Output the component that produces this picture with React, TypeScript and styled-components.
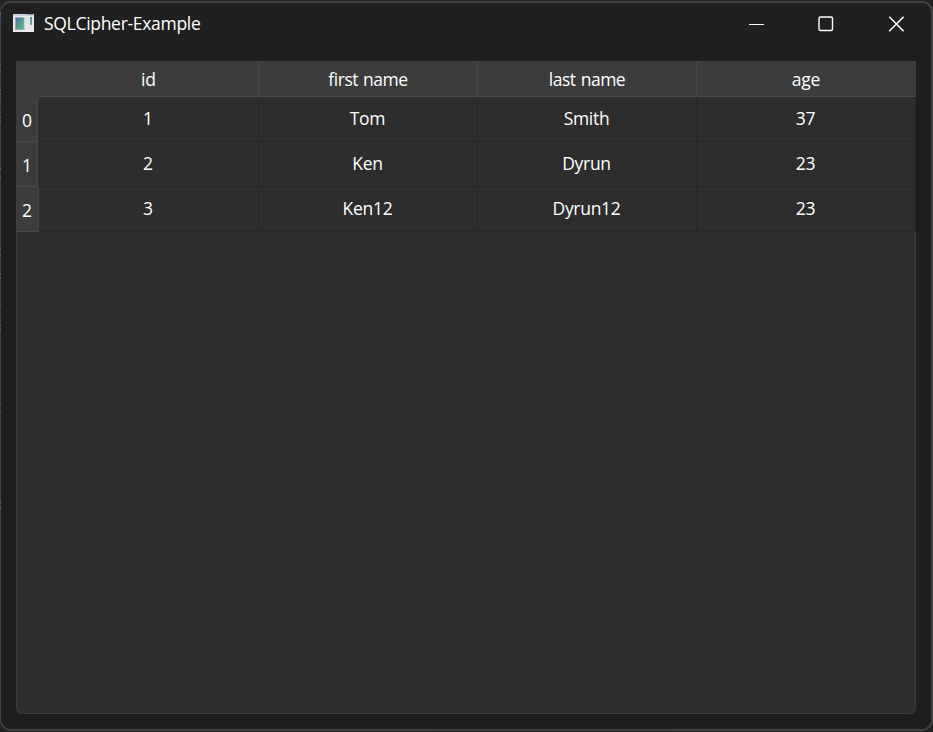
import React from "react";
import styled, { createGlobalStyle } from "styled-components";

const Global = createGlobalStyle`
  * { box-sizing: border-box; }
  html, body { margin: 0; padding: 0; background: #202224; }
`;

const Desktop = styled.div`
  position: relative;
  width: 933px;
  height: 732px;
  padding: 1px 0;
  background: linear-gradient(90deg, #222426, #211f1f);
  overflow: hidden;
  font-family: "Open Sans", "Noto Sans", sans-serif;
  font-size: 17.5px;
  color: #fff;
`;

/* Slivers of the editor behind the window, seen along its left edge. */
const EdgeGlints = styled.svg`
  position: absolute;
  left: 0;
  top: 0;
  width: 1px;
  height: 732px;
`;

const Window = styled.div`
  height: 730px;
  display: flex;
  flex-direction: column;
  border: solid #424242;
  border-width: 2px 2px 2px 1px;
  border-radius: 11px;
  background: #1e1e1e;
  overflow: hidden;
`;

const TitleBar = styled.header`
  height: 43px;
  flex: none;
  display: flex;
  align-items: flex-start;
  background: #202020;
  padding-left: 12px;
`;

const AppIcon = styled.svg`
  width: 21px;
  height: 18px;
  margin: 11px 10px 0 0;
`;

const Title = styled.div`
  flex: 1;
  line-height: 24px;
  margin-top: 8px;
  letter-spacing: -0.3px;
`;

const WindowButton = styled.button`
  width: 70px;
  height: 41px;
  padding: 0;
  border: 0;
  background: none;
  display: grid;
  place-items: center;
`;

const Table = styled.main`
  flex: 1;
  margin: 15px 15px 15px 15px;
  background: #2d2d2d;
  border-radius: 0 0 6px 6px;
  box-shadow: inset 0 0 0 1px #3b3b3b;
`;

const Row = styled.div<{ $header?: boolean }>`
  height: ${(p) => (p.$header ? 36 : 45)}px;
  display: grid;
  grid-template-columns: 23px 220px 219px 219px 219px;
  grid-template-rows: 100%;
`;

const Corner = styled.div`
  background: #3c3c3c;
  border-right: 1px solid #373737;
`;

const ColumnHeader = styled.div<{ $spacing: number }>`
  background: #3c3c3c;
  border-right: 1px solid #484848;
  border-bottom: 1px solid #4a4a4a;
  text-align: center;
  line-height: 37px;
  letter-spacing: ${(p) => p.$spacing}px;
  word-spacing: 1px;
  &:last-child { border-right-color: #3c3c3c; }
`;

const RowHeader = styled.div<{ $last: boolean }>`
  background: #3c3c3c;
  border-right: 1px solid ${(p) => (p.$last ? "#424242" : "#484848")};
  border-bottom: 1px solid #4a4a4a;
  margin-right: ${(p) => (p.$last ? 0 : 1)}px;
  padding-left: ${(p) => (p.$last ? 0 : 1)}px;
  text-align: center;
  line-height: 47px;
`;

const Cell = styled.div<{ $spacing: number }>`
  background: #2d2d2d;
  border-right: 1px solid #262626;
  border-bottom: 1px solid #262626;
  padding-right: 1px;
  text-align: center;
  line-height: 43px;
  letter-spacing: ${(p) => p.$spacing}px;
`;

const columns: [string, number][] = [["id", -0.1], ["first name", -0.48], ["last name", -0.48], ["age", -0.2]];
const rows = [
  ["1", "Tom", "Smith", "37"],
  ["2", "Ken", "Dyrun", "23"],
  ["3", "Ken12", "Dyrun12", "23"],
];

const glints: [number, string][] = [
  [13, "#2f7b88"], [14, "#2f7b88"], [18, "#27648a"], [20, "#27648a"],
  [64, "#2f7280"], [70, "#376f94"], [90, "#35807f"], [93, "#35807f"],
  [97, "#2d6590"], [100, "#2e7a74"], [117, "#866858"], [121, "#866858"],
  [142, "#2f7280"], [148, "#376f94"], [168, "#866858"], [177, "#866858"],
  [221, "#6d604d"], [248, "#2e7a74"], [254, "#2e7a74"], [273, "#866858"],
  [277, "#866858"], [298, "#2f7280"], [304, "#376f94"], [325, "#866858"],
  [329, "#866858"], [378, "#35738a"], [385, "#2e7a74"], [403, "#2e7a74"],
  [411, "#2e7a74"], [502, "#777777"], [507, "#777777"],
];

export default function App() {
  return (
    <>
      <Global />
      <Desktop>
        <Window>
          <TitleBar>
            <AppIcon viewBox="0 0 22 18" preserveAspectRatio="none">
              <defs>
                <linearGradient id="pane" x1="0" y1="0" x2="0.7" y2="1">
                  <stop offset="0" stopColor="#4776a8" />
                  <stop offset="1" stopColor="#59b47c" />
                </linearGradient>
              </defs>
              <rect width="22" height="18" fill="#e9edf1" />
              <rect width="22" height="2" fill="#ccd3dd" />
              <rect x="15" y="0" width="6" height="1" fill="#8896a8" />
              <rect x="2" y="3" width="10" height="13" fill="#9aa9b8" />
              <rect x="3" y="4" width="8" height="11" fill="url(#pane)" />
              <rect x="13" y="3" width="4" height="7" fill="#dedfdd" />
              <rect x="18" y="3" width="2" height="8" fill="url(#pane)" />
              <rect x="13" y="11" width="7" height="5" fill="#e4e5e4" />
            </AppIcon>
            <Title>SQLCipher-Example</Title>
            <WindowButton aria-label="Minimize">
              <svg width="16" height="16"><path d="M1 8.5H16" stroke="#fff" /></svg>
            </WindowButton>
            <WindowButton aria-label="Maximize">
              <svg width="16" height="16">
                <rect x="1" y="1" width="13.5" height="13.5" rx="1.5" fill="none" stroke="#fff" strokeWidth="1.4" />
              </svg>
            </WindowButton>
            <WindowButton aria-label="Close">
              <svg width="16" height="16">
                <path d="M1.2.8L15.6 15.2M15.6.8L1.2 15.2" stroke="#fff" strokeWidth="1.4" />
              </svg>
            </WindowButton>
          </TitleBar>
          <Table>
            <Row $header>
              <Corner />
              {columns.map(([name, spacing]) => (
                <ColumnHeader key={name} $spacing={spacing}>{name}</ColumnHeader>
              ))}
            </Row>
            {rows.map((row, i) => (
              <Row key={i}>
                <RowHeader $last={i === rows.length - 1}>{i}</RowHeader>
                {row.map((value, j) => (
                  <Cell key={j} $spacing={j === 0 ? 0 : -0.3}>{value}</Cell>
                ))}
              </Row>
            ))}
          </Table>
        </Window>
        <EdgeGlints>
          {glints.map(([y, color]) => (
            <rect key={y} y={y} width="1" height="1" fill={color} />
          ))}
        </EdgeGlints>
      </Desktop>
    </>
  );
}
